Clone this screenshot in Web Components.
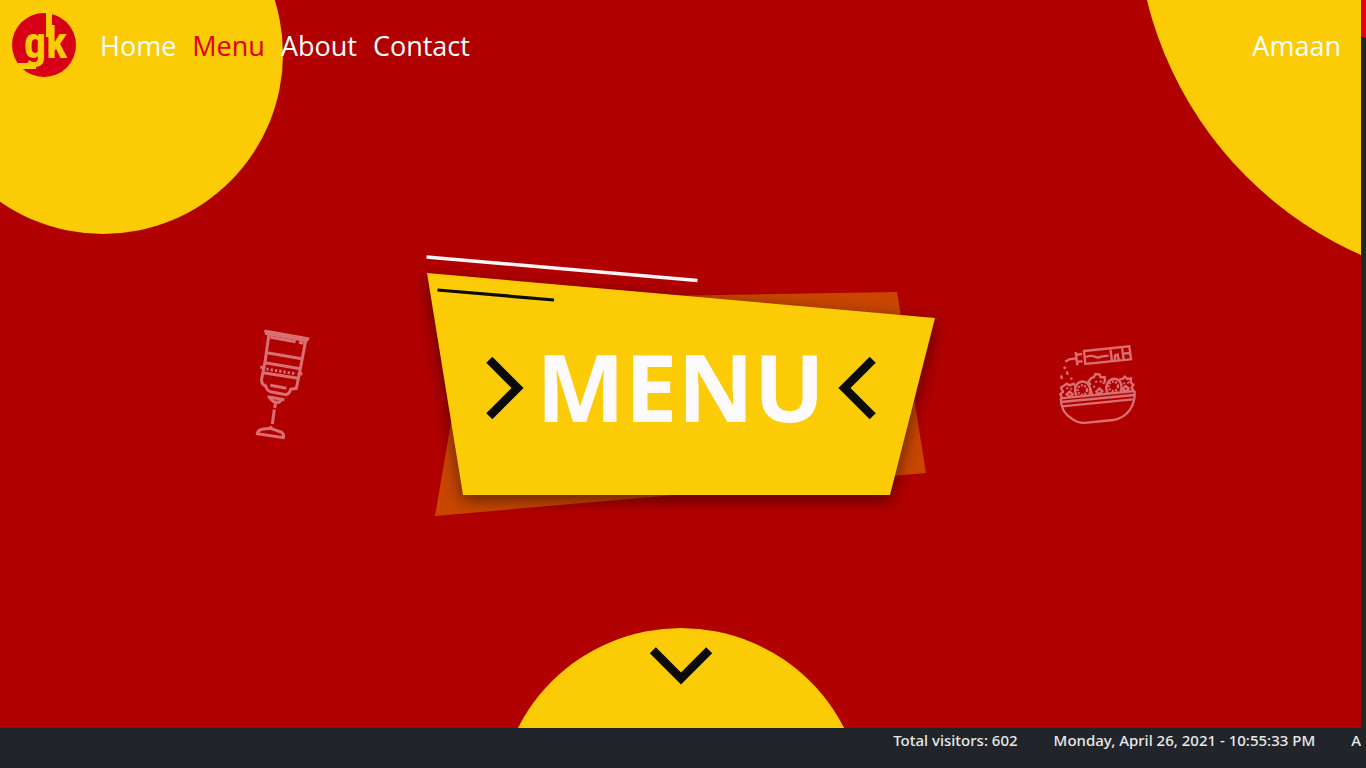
<!DOCTYPE html>
<html lang="en">
<head>
<meta charset="utf-8">
<meta name="viewport" content="width=device-width, initial-scale=1">
<title>GK - Menu</title>
<style>
  html, body { margin: 0; height: 100%; }
  body {
    --yellow: #fbcb05;
    --red: #b10000;
    --accent: #dc0019;
    --dark: #212529;
    --ink: #0a0b0a;
    background: var(--dark);
    color: #fff;
    font-family: "Segoe UI", "Open Sans", "Noto Sans", sans-serif;
    overflow: hidden;
  }
</style>
</head>
<body>
<gk-page>
  <gk-hero>
    <gk-nav slot="nav">
      <gk-nav-link href="#home">Home</gk-nav-link>
      <gk-nav-link href="#menu" active>Menu</gk-nav-link>
      <gk-nav-link href="#about">About</gk-nav-link>
      <gk-nav-link href="#contact">Contact</gk-nav-link>
      <gk-nav-link slot="user" href="#account">Amaan</gk-nav-link>
    </gk-nav>
    <gk-glass-icon slot="left"></gk-glass-icon>
    <gk-banner slot="banner">MENU</gk-banner>
    <gk-salad-icon slot="right"></gk-salad-icon>
    <gk-scroll-down slot="more"></gk-scroll-down>
  </gk-hero>
  <gk-status-bar slot="footer">
    <span>Total visitors: 602</span>
    <span>Monday, April 26, 2021 - 10:55:33 PM</span>
    <span>A</span>
  </gk-status-bar>
</gk-page>

<script>
const define = (name, markup, setup) => {
  const template = document.createElement('template');
  template.innerHTML = markup;
  customElements.define(name, class extends HTMLElement {
    constructor() {
      super();
      this.attachShadow({ mode: 'open' }).append(template.content.cloneNode(true));
    }
    connectedCallback() { if (setup) setup(this); }
  });
};

define('gk-page', `
  <style>
    :host { display: grid; grid-template: minmax(0, 1fr) 40px / minmax(0, 1fr) 5px; height: 100vh; }
    .track { grid-column: 2; grid-row: 1 / 3; background: var(--dark); }
    .thumb { height: 37px; background: var(--accent); }
    ::slotted(*) { grid-column: 1; min-width: 0; }
  </style>
  <slot></slot>
  <slot name="footer"></slot>
  <div class="track"><div class="thumb"></div></div>
`);

define('gk-hero', `
  <style>
    :host { display: flex; flex-direction: column; position: relative; overflow: hidden; background: var(--red); }
    .disc { position: absolute; border-radius: 50%; background: var(--yellow); }
    .one { left: -77px; top: -126px; width: 360px; height: 360px; }
    .two { right: -529px; top: -467px; width: 754px; height: 754px; }
    header, main { position: relative; }
    main {
      flex: 1; display: grid; grid-template-columns: 1fr auto 1fr;
      align-items: center; column-gap: 120px; padding-top: 52px;
    }
    .left { justify-self: end; }
  </style>
  <div class="disc one"></div>
  <div class="disc two"></div>
  <header><slot name="nav"></slot></header>
  <main>
    <div class="left"><slot name="left"></slot></div>
    <slot name="banner"></slot>
    <div><slot name="right"></slot></div>
  </main>
  <slot name="more"></slot>
`);

define('gk-nav', `
  <style>
    :host { display: block; }
    nav { display: flex; align-items: center; height: 90px; padding: 0 12px; box-sizing: border-box; }
    .brand { display: flex; margin-right: 16px; }
    .user { margin-left: auto; }
    .links, .user { display: flex; padding-top: 2px; }
  </style>
  <nav aria-label="Main">
    <a class="brand" href="#home" aria-label="Home page"><gk-logo></gk-logo></a>
    <div class="links"><slot></slot></div>
    <div class="user"><slot name="user"></slot></div>
  </nav>
`);

define('gk-logo', `
  <style>
    :host { display: block; width: 64px; height: 64px; }
    svg { display: block; }
    text { font: bold 44px "Roboto Condensed", "Liberation Sans Narrow", "DejaVu Sans Condensed", sans-serif; }
  </style>
  <svg width="64" height="64" viewBox="0 0 64 64" aria-hidden="true">
    <circle cx="32" cy="32" r="32" fill="#d80016"/>
    <g fill="#fbcb05">
      <text x="12" y="45">gk</text>
      <rect x="34" y="0" width="6" height="24"/>
      <path d="M0 50H24V56H11L0 60Z"/>
    </g>
  </svg>
`);

define('gk-nav-link', `
  <style>
    :host { display: block; }
    a { display: block; padding: 0 8px; font-size: 27px; line-height: 40px; color: #fff; text-decoration: none; }
    :host([active]) a { color: var(--accent); }
  </style>
  <a><slot></slot></a>
`, el => {
  const a = el.shadowRoot.querySelector('a');
  a.href = el.getAttribute('href');
  if (el.hasAttribute('active')) a.setAttribute('aria-current', 'page');
});

define('gk-chevron', `
  <style>
    :host { display: block; width: 38px; height: 64px; }
    :host([dir="left"]) { transform: rotate(180deg); }
    :host([dir="down"]) { transform: rotate(90deg); }
    svg { display: block; }
  </style>
  <svg width="38" height="64" viewBox="0 0 38 64" aria-hidden="true">
    <path d="M3.3 3.8L31.5 32L3.3 60.2" fill="none" stroke="#0a0b0a" stroke-width="8.6"/>
  </svg>
`);

define('gk-banner', `
  <style>
    :host { display: flex; position: relative; width: 508px; height: 260px; align-items: center; justify-content: center; }
    .art { position: absolute; inset: 0; overflow: visible; }
    .board { filter: drop-shadow(0 5px 8px rgba(0, 0, 0, .5)); }
    .row { position: relative; display: flex; width: 390px; align-items: center; justify-content: space-between; padding-top: 6px; }
    h1 { margin: 0; font: bold 94px/92px "Open Sans", "Noto Sans", sans-serif; color: #fcfafc; padding-bottom: 4px; }
  </style>
  <svg class="art" width="508" height="260" viewBox="427 255 508 260" aria-hidden="true">
    <path d="M472 299L897 292L926 473L435 516Z" fill="#c84600"/>
    <path class="board" d="M427 273L935 318L890 495H463Z" fill="#fbcb05"/>
    <path d="M426.500 257L697.500 280.500" stroke="#fcf4f6" stroke-width="3.500"/>
    <path d="M437.500 290L554 300" stroke="#0a0b0a" stroke-width="3.200"/>
  </svg>
  <div class="row">
    <gk-chevron></gk-chevron>
    <h1><slot></slot></h1>
    <gk-chevron dir="left"></gk-chevron>
  </div>
`);

define('gk-glass-icon', `
  <style>
    :host { display: block; width: 54px; height: 112px; }
    svg { display: block; overflow: visible; }
  </style>
  <svg width="54" height="112" viewBox="24 27 162 336" fill="none" stroke="#d96f73" stroke-width="9" aria-hidden="true">
    <path d="M58 33L193 57M60 40L188 62"/>
    <path d="M72 42L60 126L50 176Q48 194 62 198Q66 214 80 216L124 224Q134 220 137 208L154 205L163 162L182 62"/>
    <path d="M76 52L152 65M162 67L176 70M66 98L170 116M60 128L166 146M54 158L160 175M46 141L56 143M158 160L172 162"/>
    <path d="M64 147L150 161" stroke-width="9" stroke-dasharray="7 6"/>
    <path d="M76 196L124 205"/>
    <path d="M68 230L118 239M74 234L85 245L102 247L110 239M92 246L89 264M88 268L82 312M78 318L77 325"/>
    <path d="M37 341Q38 331 50 328L76 325L94 331L110 337Q118 343 115 353Z"/>
  </svg>
`);

define('gk-salad-icon', `
  <style>
    :host { display: block; width: 84px; height: 80px; }
    svg { display: block; overflow: visible; }
  </style>
  <svg width="84" height="80" viewBox="15 30 252 240" fill="none" stroke="#d96f73" stroke-width="7" aria-hidden="true">
    <path d="M102 48L238 34L243 73L106 87ZM181 41L186 78M216 38L221 74M220 56L240 54M195 76V62L203 59L206 74M108 66Q124 60 134 65T152 65L176 62"/>
    <path d="M77 51L82 91M80 59L96 57M82 80L98 79M77 70L57 73L46 80"/>
    <path d="M41 96L47 101M51 109L53 119M34 121L35 132M63 128L65 134"/>
    <path d="M31 190L254 168M33 201L252 180M36 214L248 193"/>
    <path d="M32 190Q33 232 64 250Q84 266 112 263L190 255Q222 250 240 224Q256 200 254 168"/>
    <path d="M36 188L31 178L39 170L33 158L43 151L50 146L59 151L71 146L76 154"/>
    <path d="M79 182Q70 160 82 146Q99 132 115 148Q124 160 118 180"/>
    <path d="M122 150L115 140L124 129L132 126L136 117L148 118L152 127L164 126L165 137L160 147M120 158L127 180"/>
    <path d="M173 176Q163 154 177 138Q195 124 210 140Q218 154 212 171"/>
    <path d="M208 133L218 132L224 125L232 132L243 130L242 142L250 150L245 158L251 168"/>
    <circle cx="97" cy="165" r="14" stroke-dasharray="6 4"/>
    <circle cx="190" cy="154" r="14" stroke-dasharray="6 4"/>
    <path d="M50 178L59 170L68 178L60 186ZM139 170L148 160L157 168L148 178ZM218 162L227 153L236 160L228 169Z"/>
    <path d="M50 157L53 162M62 160L65 163M137 138L140 143M151 137L154 142M131 153L134 157M221 143L224 147M233 141L236 145"/>
  </svg>
`);

define('gk-scroll-down', `
  <style>
    :host { display: block; position: relative; height: 100px; overflow: hidden; }
    a {
      display: flex; justify-content: center; box-sizing: border-box;
      width: 366px; height: 366px; margin: 0 auto; padding-top: 6px;
      border-radius: 50%; background: var(--yellow);
    }
  </style>
  <a href="#items" aria-label="Scroll down"><gk-chevron dir="down"></gk-chevron></a>
`);

define('gk-status-bar', `
  <style>
    :host { display: block; background: var(--dark); color: #e9eaeb; overflow: hidden; }
    footer { display: flex; justify-content: flex-end; gap: 36px; font-size: 15px; font-weight: 500; font-family: "Segoe UI", "Noto Sans", sans-serif; line-height: 24px; white-space: nowrap; }
  </style>
  <footer><slot></slot></footer>
`);
</script>
</body>
</html>
